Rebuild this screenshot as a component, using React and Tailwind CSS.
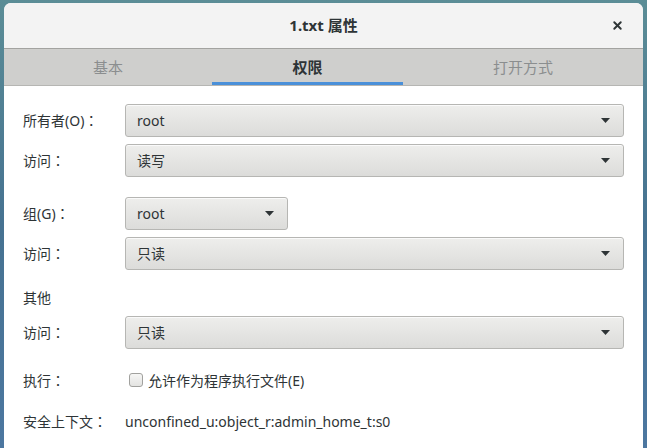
import { X } from 'lucide-react';

// Diálogo de propiedades de archivo (pestaña 权限), estilo GTK/Adwaita.
const font = { fontFamily: '"Noto Sans", "Noto Sans CJK SC", sans-serif' };

function Flecha() {
  return (
    <svg width="9" height="5" viewBox="0 0 9 5" className="shrink-0">
      <path d="M0 0 H9 L4.5 5 Z" fill="#2e3436" />
    </svg>
  );
}

function Combo({ valor, ancho = 'flex-1' }) {
  return (
    <div
      className={`${ancho} flex h-[33px] items-center justify-between rounded-[3px] border border-[#b6b6b3] bg-gradient-to-b from-[#eeeeec] to-[#dcdcda] pl-[11px] pr-[13px] text-[14px] text-[#2e3436] shadow-[inset_0_1px_0_#fafafa]`}
    >
      <span>{valor}</span>
      <Flecha />
    </div>
  );
}

// Los dos puntos de ancho completo centrados, como en la captura.
const Dos = () => <span className="font-['Noto_Sans_CJK_JP',sans-serif]">：</span>;

function Fila({ etiqueta, children, className = '' }) {
  return (
    <div className={`flex items-center ${className}`}>
      <span className="w-[102px] shrink-0 text-[14px] text-[#2e3436]">
        {etiqueta}
        <Dos />
      </span>
      {children}
    </div>
  );
}

export default function App() {
  return (
    <div
      className="h-[448px] w-[647px] overflow-hidden bg-gradient-to-b from-[#5b8d96] via-[#467291] to-[#4c77a0] px-[4px] pt-[3px]"
      style={font}
    >
      <div className="flex h-full flex-col overflow-hidden rounded-t-[7px] bg-white">
        {/* Barra de título */}
        <div className="relative flex h-[46px] shrink-0 items-center justify-center border-b border-[#a3a3a0] bg-[#f3f3f3]">
          <span className="text-[15px] font-bold text-[#2e3436]">1.txt 属性</span>
          <X className="absolute right-[19px] top-[16px] h-[13px] w-[13px] text-[#2e3436]" strokeWidth={3.5} />
        </div>

        {/* Pestañas */}
        <div className="flex h-[37px] shrink-0 border-b border-[#b6b6b3] bg-[#cfcfcd] text-[15px]">
          <div className="flex w-[208px] items-center justify-center text-[#8b8e8f]">基本</div>
          <div className="relative flex w-[191px] items-center justify-center font-bold text-[#2e3436]">
            权限
            <div className="absolute bottom-0 left-0 right-0 h-[3px] bg-[#4a90d9]" />
          </div>
          <div className="flex flex-1 items-center justify-center text-[#8b8e8f]">打开方式</div>
        </div>

        {/* Contenido */}
        <div className="flex flex-col px-[19px]">
          <Fila etiqueta="所有者(O)" className="mt-[18px]">
            <Combo valor="root" />
          </Fila>
          <Fila etiqueta="访问" className="mt-[7px]">
            <Combo valor="读写" />
          </Fila>

          <Fila etiqueta="组(G)" className="mt-[20px]">
            <Combo valor="root" ancho="w-[163px]" />
          </Fila>
          <Fila etiqueta="访问" className="mt-[7px]">
            <Combo valor="只读" />
          </Fila>

          <div className="mt-[16px] flex h-[22px] items-center text-[14px] text-[#2e3436]">其他</div>
          <Fila etiqueta="访问" className="mt-[8px]">
            <Combo valor="只读" />
          </Fila>

          <Fila etiqueta="执行" className="mt-[20px] h-[22px]">
            <div className="flex items-center gap-[5px] pl-[4px] text-[14px] text-[#2e3436]">
              <span className="h-[14px] w-[14px] rounded-[3px] border border-[#a1a19e] bg-gradient-to-b from-[#f6f6f5] to-[#e3e3e1]" />
              <span>允许作为程序执行文件(E)</span>
            </div>
          </Fila>

          <Fila etiqueta="安全上下文" className="mt-[19px] h-[22px]">
            <span className="text-[14px] text-[#2e3436]">unconfined_u:object_r:admin_home_t:s0</span>
          </Fila>
        </div>
      </div>
    </div>
  );
}
